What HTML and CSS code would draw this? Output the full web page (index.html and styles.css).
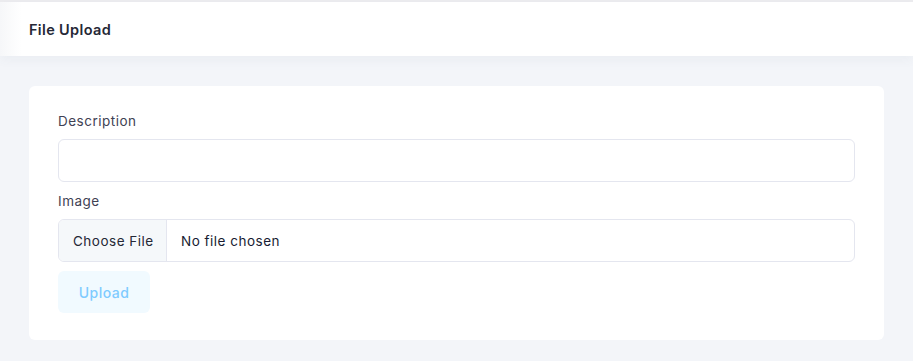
FILE: index.html
```html
<!DOCTYPE html>
<html>
<head>
<meta charset="utf-8">
<link rel="stylesheet" href="styles.css">
</head>
<body>
<div class="page">
  <header class="topbar">
    <h1 class="title">File Upload</h1>
  </header>
  <main class="content">
    <section class="card">
      <div class="field">
        <label class="label">Description</label>
        <div class="input"></div>
      </div>
      <div class="field">
        <label class="label">Image</label>
        <div class="file-input">
          <span class="file-btn">Choose File</span>
          <span class="file-name">No file chosen</span>
        </div>
      </div>
      <div class="actions">
        <button class="upload-btn">Upload</button>
      </div>
    </section>
  </main>
</div>
</body>
</html>
```
FILE: styles.css
```css
* { box-sizing: border-box; }
html, body { margin: 0; padding: 0; }
body {
  width: 913px;
  height: 361px;
  overflow: hidden;
  background: #f3f5f9;
  font-family: "Inter", "Open Sans", sans-serif;
  color: #3f4254;
}
.page {
  display: flex;
  flex-direction: column;
  height: 361px;
  border-top: 2px solid #ececef;
}
.topbar {
  height: 54px;
  background: linear-gradient(to right, #f6f7f9 0, #ffffff 22px);
  display: flex;
  align-items: center;
  padding-left: 29px;
  box-shadow: 0 4px 10px rgba(80, 90, 120, 0.05);
}
.title {
  margin: 0;
  font-size: 14.5px;
  font-weight: 600;
  color: #252836;
  letter-spacing: 0.35px;
}
.content {
  flex: 1;
  padding: 30px 29px 0 29px;
}
.card {
  background: #ffffff;
  border-radius: 6px;
  padding: 25px 29px 27px 29px;
  display: flex;
  flex-direction: column;
  gap: 9px;
}
.field {
  display: flex;
  flex-direction: column;
  gap: 8px;
}
.label {
  font-size: 13.5px;
  line-height: 20px;
  color: #3f4254;
  letter-spacing: 0.5px;
}
.input {
  height: 43px;
  border: 1px solid #e4e6ef;
  border-radius: 6px;
  background: #fff;
}
.file-input {
  height: 43px;
  border: 1px solid #e4e6ef;
  border-radius: 6px;
  display: flex;
  align-items: stretch;
  overflow: hidden;
  font-size: 13.5px;
  letter-spacing: 0.5px;
  color: #181c32;
}
.file-btn {
  width: 108px;
  background: #f5f8fa;
  border-right: 1px solid #e4e6ef;
  display: flex;
  align-items: center;
  padding-left: 14px;
  color: #252836;
}
.file-name {
  display: flex;
  align-items: center;
  padding-left: 14px;
}
.actions { display: flex; }
.upload-btn {
  width: 92px;
  height: 42px;
  border: none;
  border-radius: 6px;
  background: #f1faff;
  color: #7fcbff;
  font-family: inherit;
  font-size: 14px;
  letter-spacing: 0.5px;
  font-weight: 500;
  padding: 0;
}
```
